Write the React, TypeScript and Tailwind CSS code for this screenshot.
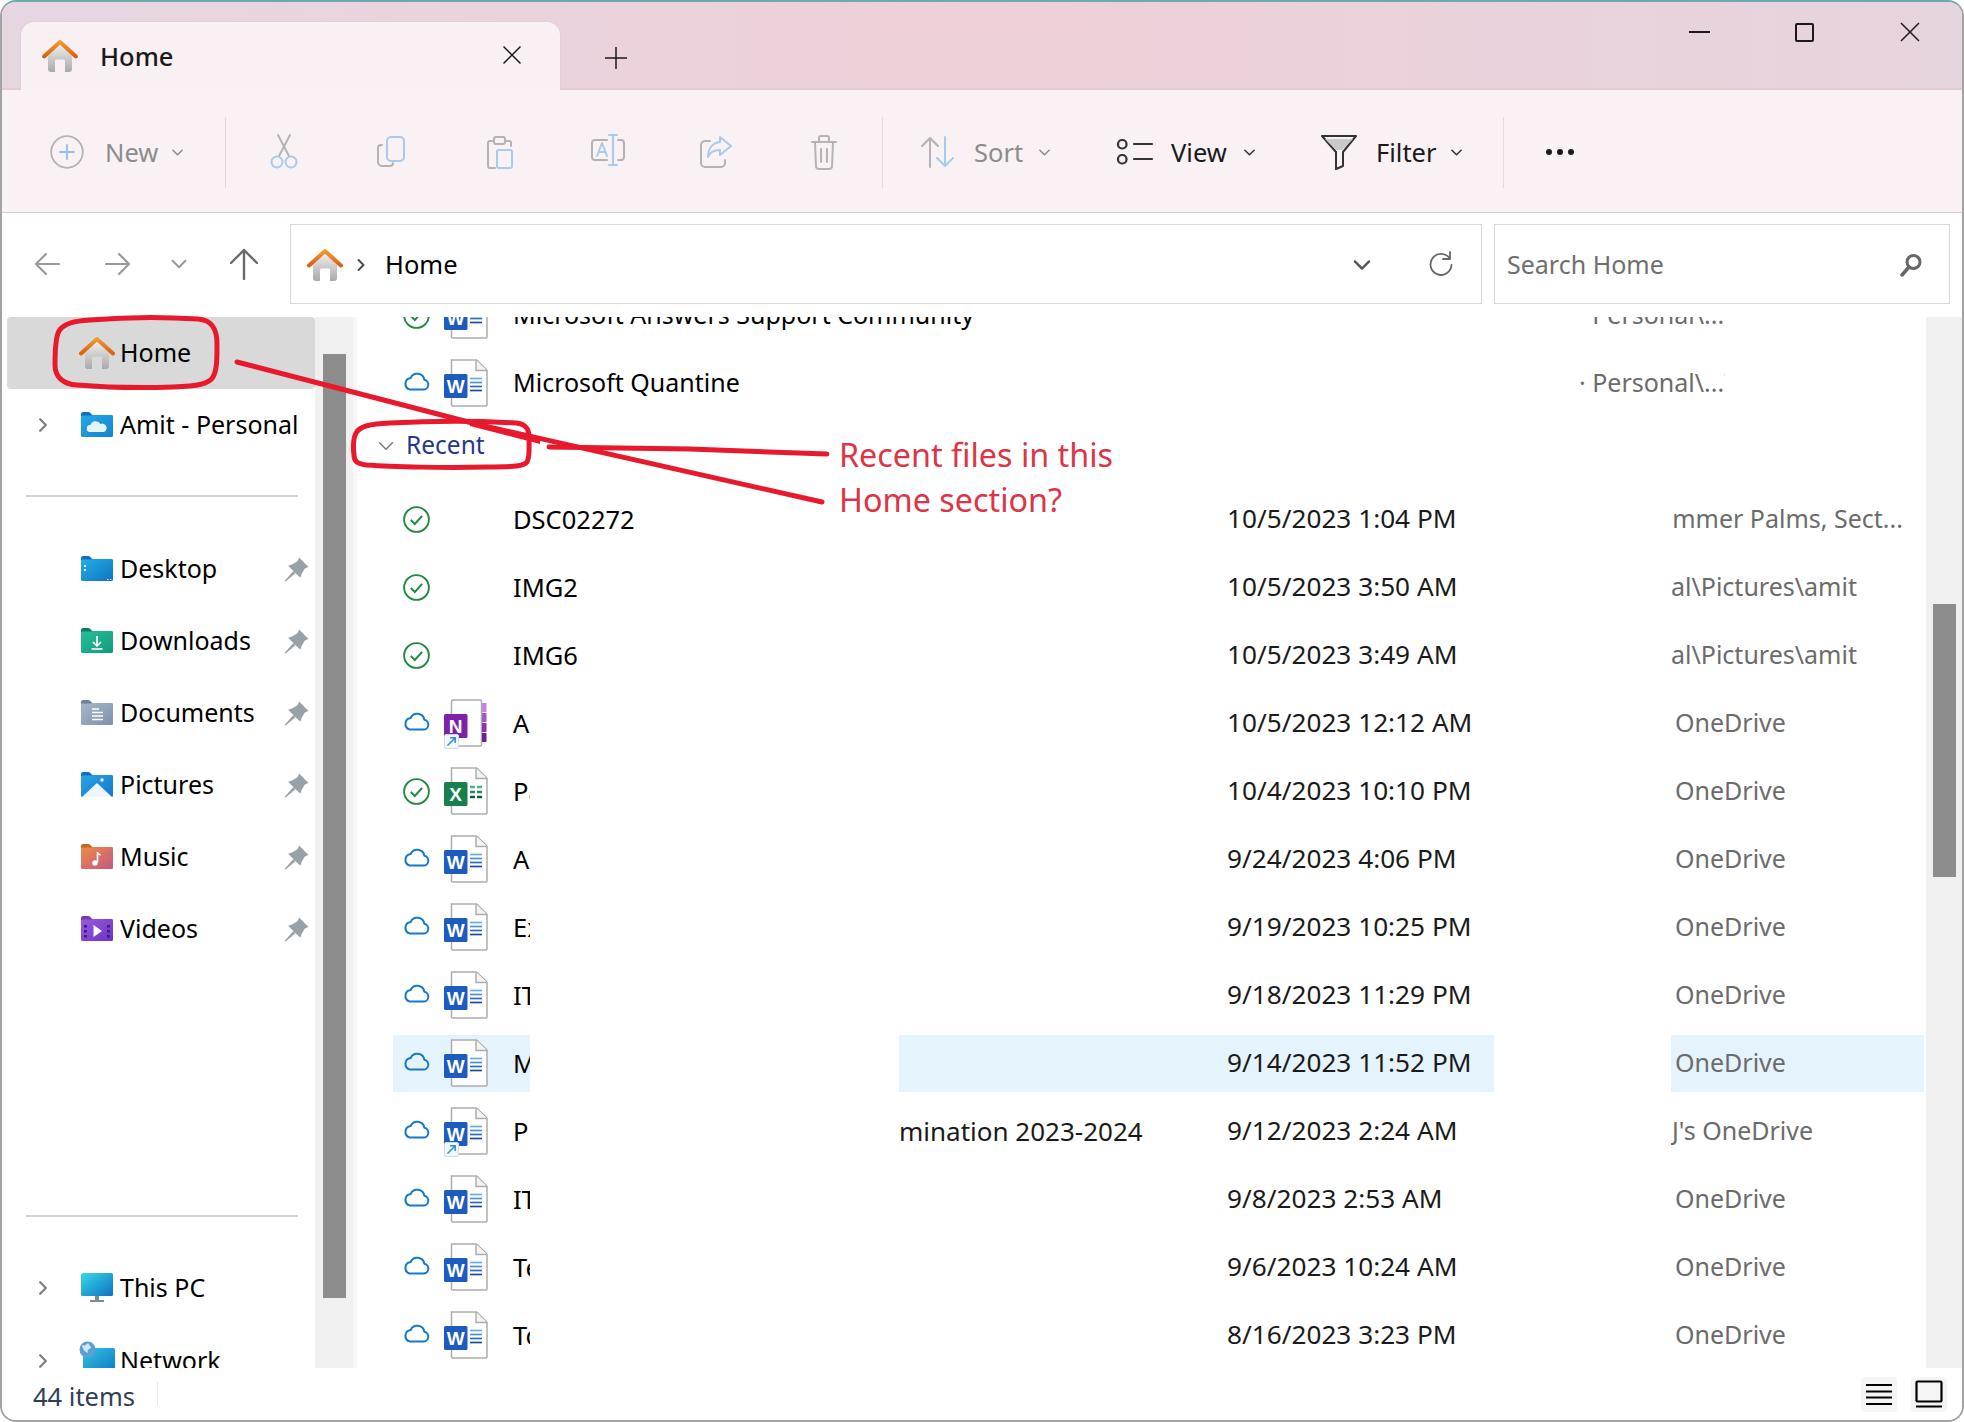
import React from "react";

const SANS = "font-['Noto_Sans',sans-serif]";

// ---- small shared drawings ----
function HomeIcon({ id }: { id: string }) {
  return (
    <svg width="36" height="34" viewBox="0 0 36 34" className="shrink-0">
      <defs>
        <linearGradient id={`body-${id}`} x1="0" y1="0" x2="0" y2="1">
          <stop offset="0" stopColor="#efefef" />
          <stop offset="1" stopColor="#a9a9a9" />
        </linearGradient>
        <linearGradient id={`roof-${id}`} x1="0" y1="0" x2="0" y2="1">
          <stop offset="0" stopColor="#f29a2e" />
          <stop offset="1" stopColor="#d9600f" />
        </linearGradient>
      </defs>
      <path d="M6 15 18 5l12 10v15a3 3 0 0 1-3 3h-4V22a1.500 1.500 0 0 0-1.500-1.500h-7A1.500 1.500 0 0 0 13 22v11H9a3 3 0 0 1-3-3z" fill={`url(#body-${id})`} />
      <path d="M2 17.500 18 3l16 14.500" fill="none" stroke={`url(#roof-${id})`} strokeWidth="4" strokeLinejoin="round" strokeLinecap="round" />
    </svg>
  );
}

function Chevron({ size = 14, color = "#8a8a8a", width = 1.6, dir = "down" }: { size?: number; color?: string; width?: number; dir?: "down" | "right" }) {
  return (
    <svg width={size} height={size} viewBox="0 0 14 14" fill="none" className="shrink-0">
      <path d={dir === "down" ? "M2 4.500 7 9.500 12 4.500" : "M4.500 2 9.500 7 4.500 12"} stroke={color} strokeWidth={width} strokeLinecap="round" strokeLinejoin="round" />
    </svg>
  );
}

function Folder({ id, tab, from, to, children }: { id: string; tab: string; from: string; to: string; children?: React.ReactNode }) {
  return (
    <svg width="32" height="26" viewBox="0 0 32 26" className="shrink-0">
      <defs>
        <linearGradient id={id} x1="0" y1="0" x2="1" y2="1">
          <stop offset="0" stopColor={from} />
          <stop offset="1" stopColor={to} />
        </linearGradient>
      </defs>
      <path d="M0 2a2 2 0 0 1 2-2h6l3.500 3H30a2 2 0 0 1 2 2v3H0z" fill={tab} />
      <path d="M0 3.500h9.500L12 3h18a2 2 0 0 1 2 2v18.500a1.500 1.500 0 0 1-1.500 1.500h-29A1.500 1.500 0 0 1 0 23.500z" fill={`url(#${id})`} />
      {children}
    </svg>
  );
}

const PIN = (
  <svg width="25" height="25" viewBox="0 0 24 24" className="shrink-0">
    <path d="M14.500 0.500 23.500 9.500 20 11 17 16 15.600 20 4 8.400 8 7 13 4z" fill="#98a1a8" />
    <path d="M9 13.500 0.500 23 1.500 23.500 11 15.500z" fill="#98a1a8" />
  </svg>
);

// ---- file type icons ----
function FileSheet({ children }: { children?: React.ReactNode }) {
  return (
    <svg width="44" height="48" viewBox="0 0 44 48" className="shrink-0">
      <path d="M7.500 1h25L43 11v35a1 1 0 0 1-1 1H8.500a1 1 0 0 1-1-1z" fill="#fff" stroke="#adadad" strokeWidth="1.500" />
      <path d="M32 1v10.500h11" fill="#f4f4f4" stroke="#adadad" strokeWidth="1.500" />
      {children}
    </svg>
  );
}

function WordIcon({ shortcut }: { shortcut?: boolean }) {
  return (
    <div className="relative shrink-0">
      <FileSheet>
        <rect x="0" y="15" width="23.500" height="24" rx="1.500" fill="#1d5bbf" />
        <text x="11.700" y="33.500" textAnchor="middle" fontSize="19" fontWeight="700" fill="#fff" fontFamily="Liberation Sans, sans-serif">W</text>
        <path d="M26 19.500h12" stroke="#66aee6" strokeWidth="1.700" />
        <path d="M26 23.500h12" stroke="#4d8fd6" strokeWidth="1.700" />
        <path d="M26 27.500h12" stroke="#2b6cc0" strokeWidth="1.700" />
        <path d="M26 31.500h12" stroke="#1a4c9c" strokeWidth="1.700" />
      </FileSheet>
      {shortcut && <ShortcutBadge />}
    </div>
  );
}

function ExcelIcon() {
  return (
    <FileSheet>
      <rect x="0" y="15" width="23.500" height="24" rx="1.500" fill="#1a7f4f" />
      <text x="11.700" y="33.500" textAnchor="middle" fontSize="19" fontWeight="700" fill="#fff" fontFamily="Liberation Sans, sans-serif">X</text>
      <path d="M26 20h5m2 0h5" stroke="#4fb384" strokeWidth="2.500" />
      <path d="M26 25h5m2 0h5" stroke="#1f8a58" strokeWidth="2.500" />
      <path d="M26 30h5m2 0h5" stroke="#125a3a" strokeWidth="2.500" />
    </FileSheet>
  );
}

function ShortcutBadge() {
  return (
    <svg width="15" height="15" viewBox="0 0 15 15" className="absolute left-0 top-[35px]">
      <rect x="0.500" y="0.500" width="14" height="14" rx="1.500" fill="#f3f8fc" stroke="#cfdbe6" />
      <path d="M3.500 11.500 11 4M6 3.800h5.200V9" fill="none" stroke="#2b8ed6" strokeWidth="1.500" />
    </svg>
  );
}

function OneNoteIcon() {
  return (
    <div className="relative shrink-0">
      <svg width="44" height="48" viewBox="0 0 44 48">
        <path d="M9 1h27a1.500 1.500 0 0 1 1.500 1.500v43a1.500 1.500 0 0 1-1.500 1.500H9a1.500 1.500 0 0 1-1.500-1.500v-43A1.500 1.500 0 0 1 9 1z" fill="#fff" stroke="#adadad" strokeWidth="1.500" />
        <rect x="38" y="4" width="4.500" height="9" fill="#c77fe0" />
        <rect x="38" y="14" width="4.500" height="9" fill="#a855c8" />
        <rect x="38" y="24" width="4.500" height="9" fill="#8a35ad" />
        <rect x="38" y="34" width="4.500" height="9" fill="#6f2391" />
        <rect x="0" y="15" width="23.500" height="24" rx="1.500" fill="#7b22a8" />
        <text x="11.700" y="33.500" textAnchor="middle" fontSize="19" fontWeight="700" fill="#fff" fontFamily="Liberation Sans, sans-serif">N</text>
      </svg>
      <ShortcutBadge />
    </div>
  );
}

const CLOUD = (
  <svg width="27" height="20" viewBox="0 0 27 20" fill="none" className="shrink-0 -translate-y-[2px]">
    <path d="M7 18.600h13.500a5 5 0 0 0 .8-9.900 7.200 7.200 0 0 0-13.700-1.700A5.900 5.900 0 0 0 7 18.600z" stroke="#1478cc" strokeWidth="2" strokeLinejoin="round" />
  </svg>
);

const CHECK = (
  <svg width="27" height="27" viewBox="0 0 27 27" fill="none" className="shrink-0">
    <circle cx="13.500" cy="13.500" r="12.400" stroke="#1f8a3d" strokeWidth="1.900" />
    <path d="M7.800 14 11.800 18 19.200 9.800" stroke="#1f8a3d" strokeWidth="1.900" />
  </svg>
);

// ---- data ----
type Row = { sync: "cloud" | "check"; icon?: "word" | "wordS" | "excel" | "note"; name: string; clip?: boolean; subject?: string; date: string; loc: string; locOffset?: number; selected?: boolean };

const ROWS: Row[] = [
  { sync: "check", name: "DSC02272", date: "10/5/2023 1:04 PM", loc: "Summer Palms, Sect...", locOffset: -28 },
  { sync: "check", name: "IMG2", date: "10/5/2023 3:50 AM", loc: "al\\Pictures\\amit" },
  { sync: "check", name: "IMG6", date: "10/5/2023 3:49 AM", loc: "al\\Pictures\\amit" },
  { sync: "cloud", icon: "note", name: "A", clip: true, date: "10/5/2023 12:12 AM", loc: "OneDrive", locOffset: 4 },
  { sync: "check", icon: "excel", name: "Pa", clip: true, date: "10/4/2023 10:10 PM", loc: "OneDrive", locOffset: 4 },
  { sync: "cloud", icon: "word", name: "A", clip: true, date: "9/24/2023 4:06 PM", loc: "OneDrive", locOffset: 4 },
  { sync: "cloud", icon: "word", name: "Ex", clip: true, date: "9/19/2023 10:25 PM", loc: "OneDrive", locOffset: 4 },
  { sync: "cloud", icon: "word", name: "IT", clip: true, date: "9/18/2023 11:29 PM", loc: "OneDrive", locOffset: 4 },
  { sync: "cloud", icon: "word", name: "M", clip: true, date: "9/14/2023 11:52 PM", loc: "OneDrive", locOffset: 4, selected: true },
  { sync: "cloud", icon: "wordS", name: "P", clip: true, subject: "mination 2023-2024", date: "9/12/2023 2:24 AM", loc: "J's OneDrive", locOffset: 1 },
  { sync: "cloud", icon: "word", name: "IT", clip: true, date: "9/8/2023 2:53 AM", loc: "OneDrive", locOffset: 4 },
  { sync: "cloud", icon: "word", name: "Te", clip: true, date: "9/6/2023 10:24 AM", loc: "OneDrive", locOffset: 4 },
  { sync: "cloud", icon: "word", name: "To", clip: true, date: "8/16/2023 3:23 PM", loc: "OneDrive", locOffset: 4 },
];

function FileIcon({ icon }: { icon?: Row["icon"] }) {
  if (icon === "word") return <WordIcon />;
  if (icon === "wordS") return <WordIcon shortcut />;
  if (icon === "excel") return <ExcelIcon />;
  if (icon === "note") return <OneNoteIcon />;
  return <div className="w-[44px] shrink-0" />;
}

function FileRow({ row }: { row: Row }) {
  const sel = row.selected ? "bg-[#e5f3fd]" : "";
  return (
    <div className="flex h-[68px] items-center pl-[36px]">
      <div className={`flex h-[57px] w-[137px] items-center pl-[10px] ${sel} ${row.clip ? "overflow-hidden" : ""}`}>
        {row.sync === "cloud" ? CLOUD : CHECK}
        <div className="ml-[14px]"><FileIcon icon={row.icon} /></div>
        <span className="ml-[25px] whitespace-nowrap text-[25.500px] text-black">{row.name}</span>
      </div>
      <div className="w-[369px]" />
      <div className={`flex h-[57px] w-[595px] items-center ${sel}`}>
        <span className="w-[328px] whitespace-nowrap text-[26px] text-[#1a1a1a]">{row.subject}</span>
        <span className="whitespace-nowrap text-[26.200px] text-[#1a1a1a]">{row.date}</span>
      </div>
      <div className="w-[177px]" />
      <div className={`flex h-[57px] w-[253px] items-center overflow-hidden ${sel}`}>
        <span style={{ marginLeft: row.locOffset ?? 0 }} className="whitespace-nowrap text-[25px] text-[#6b6b6b]">{row.loc}</span>
      </div>
    </div>
  );
}

function PinnedRow({ label, icon }: { label: string; icon: React.ReactNode }) {
  return (
    <div className="flex h-[72px] w-[313px] items-center pl-[79px]">
      {icon}
      <span className="ml-[7px] text-[25px] text-black">{label}</span>
      <div className="ml-auto mr-[6px]">{PIN}</div>
    </div>
  );
}

function TopFileRow({ name, loc }: { name: string; loc: string }) {
  return (
    <div className="flex h-[68px] items-center pl-[46px]">
      {name.includes("Answers") ? CHECK : CLOUD}
      <div className="ml-[14px]"><WordIcon /></div>
      <span className="ml-[25px] w-[1066px] whitespace-nowrap text-[25px] text-black">{name}</span>
      <span className="w-[146px] overflow-hidden whitespace-nowrap text-[25px] text-[#6b6b6b]">{loc}</span>
    </div>
  );
}

function ToolIcon({ children }: { children: React.ReactNode }) {
  return (
    <div className="flex w-[108px] items-center justify-center">
      <svg width="40" height="40" viewBox="0 0 40 40" fill="none" strokeLinecap="round" strokeLinejoin="round" strokeWidth="2">
        {children}
      </svg>
    </div>
  );
}

const GRAY = "#b3b3b3";
const BLUE = "#a8cbea";

export default function App() {
  return (
    <div className={`relative flex h-[1422px] w-[1964px] flex-col overflow-hidden rounded-[16px] border-2 border-[#a3a3a3] border-t-[#6fa9ad] bg-white ${SANS}`}>
      {/* title bar + tab */}
      <div className="flex h-[88px] shrink-0 items-start bg-gradient-to-r from-[#e6d6e2] via-[#eed0d8] to-[#e6d4df] shadow-[inset_0_-2px_0_#e2cbd3]">
        <div className="ml-[18px] mt-[19px] flex h-[69px] w-[541px] items-center rounded-t-[14px] border-x border-t border-[#e2d0d8] bg-[#f9f0f4] pl-[21px]">
          <HomeIcon id="tab" />
          <span className="ml-[22px] text-[25.500px] font-medium text-[#1a1a1a]">Home</span>
          <svg width="20" height="20" viewBox="0 0 20 20" className="ml-[329px] -translate-y-[1px]"><path d="M1.500 1.500 18.500 18.500M18.500 1.500 1.500 18.500" stroke="#1a1a1a" strokeWidth="1.500" /></svg>
        </div>
        <div className="mt-[19px] flex h-[74px] w-[110px] items-center justify-center">
          <svg width="22" height="22" viewBox="0 0 22 22"><path d="M11 0v22M0 11h22" stroke="#1a1a1a" strokeWidth="1.500" /></svg>
        </div>
        <div className="ml-auto flex">
          <div className="flex h-[60px] w-[105px] items-center justify-center">
            <div className="h-[2px] w-[21px] bg-[#1a1a1a]" />
          </div>
          <div className="flex h-[60px] w-[105px] items-center justify-center">
            <div className="h-[19px] w-[19px] rounded-[2px] border-2 border-[#1a1a1a]" />
          </div>
          <div className="flex h-[60px] w-[105px] items-center justify-center">
            <svg width="20" height="20" viewBox="0 0 20 20"><path d="M1 1 19 19M19 1 1 19" stroke="#1a1a1a" strokeWidth="1.500" /></svg>
          </div>
        </div>
      </div>

      {/* toolbar */}
      <div className="flex h-[123px] shrink-0 items-center border-b border-[#dccbd0] bg-[#f9f1f4] pt-[2px]">
        <div className="flex w-[223px] items-center pl-[48px] text-[25.500px] text-[#8c8c8c]">
          <svg width="34" height="34" viewBox="0 0 34 34" fill="none">
            <circle cx="17" cy="17" r="15.800" stroke={GRAY} strokeWidth="1.800" />
            <path d="M17 10v14M10 17h14" stroke="#8fbfe6" strokeWidth="1.800" strokeLinecap="round" />
          </svg>
          <span className="ml-[21px]">New</span>
          <div className="ml-[13px]"><Chevron size={13} color="#8c8c8c" /></div>
        </div>
        <div className="h-[71px] w-px bg-[#e4dade]" />
        <div className="w-[4px]" />
        <ToolIcon>
          <path d="M14 3 25 24M26 3 15 24" stroke={GRAY} />
          <circle cx="13" cy="30" r="5.500" stroke={BLUE} />
          <circle cx="27" cy="30" r="5.500" stroke={BLUE} />
        </ToolIcon>
        <ToolIcon>
          <path d="M10 13h-1a3 3 0 0 0-3 3v14a4 4 0 0 0 4 4h8a3 3 0 0 0 3-3" stroke={GRAY} />
          <rect x="15" y="5" width="17" height="24" rx="4" stroke={BLUE} />
        </ToolIcon>
        <ToolIcon>
          <path d="M13 9h-3a2 2 0 0 0-2 2v23a2 2 0 0 0 2 2h5M26 9h3a2 2 0 0 1 2 2v3" stroke={GRAY} />
          <rect x="14" y="5" width="11" height="7" rx="2" stroke={GRAY} />
          <rect x="17" y="18" width="15" height="18" rx="2" stroke={BLUE} />
        </ToolIcon>
        <ToolIcon>
          <path d="M19 8H7a3 3 0 0 0-3 3v14a3 3 0 0 0 3 3h12M30 8h3a3 3 0 0 1 3 3v14a3 3 0 0 1-3 3h-3" stroke={GRAY} />
          <path d="M21 3h8M25 3v30M21 33h8M9 24l5-13 5 13M11 20h6" stroke={BLUE} />
        </ToolIcon>
        <ToolIcon>
          <path d="M14 9H9a4 4 0 0 0-4 4v18a4 4 0 0 0 4 4h16a4 4 0 0 0 4-4v-3" stroke={GRAY} />
          <path d="M24 5l11 9-11 9v-5c-6 0-10 2-12 7 0-8 4-14 12-15z" stroke={BLUE} />
        </ToolIcon>
        <ToolIcon>
          <path d="M8 10h24M15 10V6a2 2 0 0 1 2-2h6a2 2 0 0 1 2 2v4M11 10l1 24a3 3 0 0 0 3 3h10a3 3 0 0 0 3-3l1-24M17 17v13M23 17v13" stroke={GRAY} />
        </ToolIcon>
        <div className="w-[4px]" />
        <div className="h-[71px] w-px bg-[#e4dade]" />
        <div className="flex w-[213px] items-center pl-[37px] text-[25.500px] text-[#8c8c8c]">
          <svg width="36" height="34" viewBox="0 0 36 34" fill="none" strokeWidth="2" strokeLinecap="round" strokeLinejoin="round">
            <path d="M10 32V3M2 11l8-8 8 8" stroke={GRAY} />
            <path d="M25 2v29M17 23l8 8 8-8" stroke={BLUE} />
          </svg>
          <span className="ml-[18px]">Sort</span>
          <div className="ml-[15px]"><Chevron size={13} color="#8c8c8c" /></div>
        </div>
        <div className="flex w-[204px] items-center pl-[20px] text-[25.500px] text-[#1a1a1a]">
          <svg width="38" height="30" viewBox="0 0 38 30" fill="none" stroke="#333" strokeWidth="2.200" strokeLinecap="round">
            <rect x="2" y="3" width="8.500" height="8.500" rx="4" />
            <rect x="2" y="18" width="8.500" height="8.500" rx="4" />
            <path d="M18 7h18M18 22h18" />
          </svg>
          <span className="ml-[17px]">View</span>
          <div className="ml-[16px]"><Chevron size={13} color="#333" /></div>
        </div>
        <div className="flex w-[203px] items-center pl-[20px] text-[25.500px] text-[#1a1a1a]">
          <svg width="38" height="36" viewBox="0 0 38 36" fill="none" stroke="#333" strokeWidth="2" strokeLinejoin="round">
            <path d="M2 2h34L23 18v14l-7 3V18z" />
            <path d="M5 5h28L22 16H16z" fill="#c9c9c9" stroke="none" />
          </svg>
          <span className="ml-[18px]">Filter</span>
          <div className="ml-[13px]"><Chevron size={13} color="#333" /></div>
        </div>
        <div className="h-[71px] w-px bg-[#e4dade]" />
        <div className="ml-[42px] flex gap-[5px]">
          <div className="h-[6px] w-[6px] rounded-full bg-[#1a1a1a]" />
          <div className="h-[6px] w-[6px] rounded-full bg-[#1a1a1a]" />
          <div className="h-[6px] w-[6px] rounded-full bg-[#1a1a1a]" />
        </div>
      </div>

      {/* nav + address */}
      <div className="flex h-[104px] shrink-0 items-start bg-white pl-[9px] pt-[11px]">
        <div className="flex h-[80px] w-[71px] items-center justify-center">
          <svg width="26" height="24" viewBox="0 0 26 24" fill="none" stroke="#9a9a9a" strokeWidth="2.200" strokeLinecap="round" strokeLinejoin="round"><path d="M25 12H2M12 2 2 12l10 10" /></svg>
        </div>
        <div className="flex h-[80px] w-[71px] items-center justify-center">
          <svg width="26" height="24" viewBox="0 0 26 24" fill="none" stroke="#9a9a9a" strokeWidth="2.200" strokeLinecap="round" strokeLinejoin="round"><path d="M1 12h23M14 2l10 10-10 10" /></svg>
        </div>
        <div className="flex h-[80px] w-[52px] items-center justify-center"><Chevron size={18} color="#9a9a9a" /></div>
        <div className="flex h-[80px] w-[78px] items-center justify-center">
          <svg width="30" height="32" viewBox="0 0 30 32" fill="none" stroke="#6b6b6b" strokeWidth="2.400" strokeLinecap="round" strokeLinejoin="round"><path d="M15 31V2M2 15 15 2l13 13" /></svg>
        </div>
        <div className="ml-[7px] flex h-[80px] w-[1192px] items-center border border-[#d8d8d8] pl-[16px] pr-[12px] pt-[1px]">
          <HomeIcon id="addr" />
          <div className="flex w-[36px] justify-center"><Chevron size={14} color="#4d4d4d" width={2} dir="right" /></div>
          <span className="ml-[6px] text-[25.500px] text-black">Home</span>
          <div className="ml-auto"><Chevron size={20} color="#555" /></div>
          <svg width="26" height="28" viewBox="0 0 26 28" fill="none" stroke="#666" strokeWidth="1.800" className="ml-[56px] mr-[15px] -translate-y-[1px]"><path d="M22 9a10.500 10.500 0 1 0 1.500 6M22 2v7h-7" strokeLinejoin="round" strokeLinecap="round" /></svg>
        </div>
        <div className="ml-[12px] flex h-[80px] w-[456px] items-center border border-[#d8d8d8] pl-[12px] pr-[26px] pt-[2px]">
          <span className="text-[25px] text-[#6f6f6f]">Search Home</span>
          <svg width="24" height="24" viewBox="0 0 24 24" fill="none" className="ml-auto"><circle cx="14.500" cy="9" r="6.500" stroke="#666" strokeWidth="3" /><path d="M10 14 3 22" stroke="#666" strokeWidth="3.500" strokeLinecap="round" /></svg>
        </div>
      </div>

      {/* sidebar + file list */}
      <div className="flex h-[1051px] shrink-0">
        <div className="flex w-[351px] shrink-0 overflow-hidden">
          <div className="w-[313px] shrink-0">
            <div className="ml-[5px] flex h-[72px] w-[308px] items-center rounded-[4px] bg-[#d9d9d9] pl-[72px]">
              <HomeIcon id="side" />
              <span className="ml-[5px] text-[25px] text-black">Home</span>
            </div>
            <div className="flex h-[72px] items-center pl-[33px]">
              <Chevron size={16} color="#808080" width={2} dir="right" />
              <div className="ml-[30px]">
                <Folder id="amit" tab="#0f6fc4" from="#23a9e8" to="#1583cf">
                  <path d="M9 20a3.500 3.500 0 0 1 .5-7 5.500 5.500 0 0 1 10-1 4 4 0 0 1 3.500 8z" fill="#e8f4fb" />
                </Folder>
              </div>
              <span className="ml-[7px] whitespace-nowrap text-[25px] text-black">Amit - Personal</span>
            </div>
            <div className="ml-[24px] mt-[34px] h-[2px] w-[272px] bg-[#d4d4d4]" />
            <div className="h-[36px]" />
            <PinnedRow label="Desktop" icon={
              <Folder id="desk" tab="#0f6fc4" from="#23b0e6" to="#0f74c2">
                <path d="M3 9h2v2H3zM3 13h2v2H3zM26 23h1.500v1H26zM29 23h1.500v1H29z" fill="#d8f1fb" />
              </Folder>
            } />
            <PinnedRow label="Downloads" icon={
              <Folder id="down" tab="#0d7d62" from="#28bf9a" to="#129a7c">
                <path d="M16 8v10M12 14l4 4 4-4M10.500 21h11" stroke="#fff" strokeWidth="1.600" fill="none" />
              </Folder>
            } />
            <PinnedRow label="Documents" icon={
              <Folder id="docs" tab="#6f8296" from="#a5b7cc" to="#7d91a9">
                <path d="M11 9h7M11 12.500h11M11 16h11M11 19.500h11" stroke="#fff" strokeWidth="1.500" />
              </Folder>
            } />
            <PinnedRow label="Pictures" icon={
              <Folder id="pics" tab="#0f6fc4" from="#29a6e8" to="#1476cc">
                <path d="M1 25 16 11l15 14z" fill="#eef5fb" />
                <circle cx="21" cy="8" r="1.700" fill="#fff" />
              </Folder>
            } />
            <PinnedRow label="Music" icon={
              <Folder id="music" tab="#c4671f" from="#f08a4a" to="#c0597e">
                <path d="M16.500 8v10.500" stroke="#fff" strokeWidth="1.600" />
                <circle cx="14" cy="19" r="2.700" fill="#fff" />
                <path d="M16.500 8c1 1.500 3 1.500 3.500 3.500l-3.500-.5z" fill="#fff" />
              </Folder>
            } />
            <PinnedRow label="Videos" icon={
              <Folder id="vid" tab="#6f3fb0" from="#9a5ae0" to="#6b33c4">
                <path d="M12.500 9 21 15l-8.500 6z" fill="#fff" />
                <path d="M3 9h3v2.500H3zM3 14h3v2.500H3zM3 19h3v2.500H3zM26 9h3v2.500h-3zM26 14h3v2.500h-3zM26 19h3v2.500h-3z" fill="#3c1f7a" />
              </Folder>
            } />
            <div className="ml-[24px] mt-[250px] h-[2px] w-[272px] bg-[#d4d4d4]" />
            <div className="h-[35px]" />
            <div className="flex h-[72px] items-center pl-[33px]">
              <Chevron size={16} color="#808080" width={2} dir="right" />
              <svg width="32" height="30" viewBox="0 0 32 30" className="ml-[30px] shrink-0">
                <defs>
                  <linearGradient id="pc" x1="0" y1="0" x2="1" y2="1">
                    <stop offset="0" stopColor="#35dbe6" />
                    <stop offset="1" stopColor="#0f6fc4" />
                  </linearGradient>
                </defs>
                <rect x="0" y="0" width="32" height="23" rx="1.500" fill="url(#pc)" />
                <path d="M14 23h4v4h-4zM9 27h14v2H9z" fill="#808b94" />
              </svg>
              <span className="ml-[7px] text-[25px] text-black">This PC</span>
            </div>
            <div className="flex h-[72px] items-start pl-[33px] pt-[18px]">
              <div className="mt-[11px]"><Chevron size={16} color="#808080" width={2} dir="right" /></div>
              <svg width="36" height="30" viewBox="0 0 36 30" className="ml-[28px] -mt-[1px] shrink-0">
                <defs>
                  <linearGradient id="net" x1="0" y1="0" x2="1" y2="1">
                    <stop offset="0" stopColor="#35c3e0" />
                    <stop offset="1" stopColor="#0f7cc4" />
                  </linearGradient>
                </defs>
                <rect x="4" y="7" width="32" height="23" rx="1.500" fill="url(#net)" />
                <circle cx="8.500" cy="8.500" r="8" fill="#5a9fd6" />
                <path d="M3 4c3 1 4 0 6-2 1 2 3 3 3 5-2 1-4 2-3 5-3-1-5-3-6-8z" fill="#cfe6f5" />
              </svg>
              <span className="ml-[5px] text-[25px] text-black">Network</span>
            </div>
          </div>
          <div className="w-[38px] shrink-0 bg-[#f0f0f0] px-[8px] pt-[37px]">
            <div className="h-[944px] w-[23px] bg-[#8c8c8c]" />
          </div>
        </div>
        <div className="w-[4px] shrink-0 bg-[#f7f7f7]" />
        <div className="w-[1569px] shrink-0 overflow-hidden">
          <div className="-mt-[36px]">
            <TopFileRow name="Microsoft Answers Support Community" loc="· Personal\...\" />
            <TopFileRow name="Microsoft Quantine" loc="· Personal\...\" />
            <div className="flex h-[68px] items-start pl-[20px] pt-[11px]">
              <div className="mt-[9px]"><Chevron size={18} color="#7a7a7a" width={1.2} /></div>
              <span className="ml-[11px] text-[24.500px] leading-[34px] text-[#25388c]">Recent</span>
            </div>
            {ROWS.map((row, i) => <FileRow key={i} row={row} />)}
          </div>
        </div>
        <div className="w-[36px] shrink-0 bg-[#f0f0f0] px-[7px] pt-[287px]">
          <div className="h-[273px] w-[23px] bg-[#8c8c8c]" />
        </div>
      </div>

      {/* status bar */}
      <div className="flex h-[52px] shrink-0 items-center bg-white pl-[31px] pr-[15px]">
        <span className="w-[124px] pt-[4px] text-[25.500px] text-[#2f3f57]">44 items</span>
        <div className="h-[24px] w-px bg-[#e8e8e8]" />
        <div className="ml-auto flex h-[35px] w-[36px] items-center justify-center rounded-[4px] bg-[#f5f5f5]">
          <svg width="28" height="24" viewBox="0 0 28 24" stroke="#000" strokeWidth="2.200"><path d="M1 3h26M1 9.500h26M1 15.500h26M1 22h26" /></svg>
        </div>
        <div className="ml-[14px] flex h-[35px] w-[36px] items-center justify-center rounded-[4px] bg-[#f5f5f5]">
          <svg width="28" height="28" viewBox="0 0 28 28" fill="none" stroke="#000" strokeWidth="2.200"><rect x="1.500" y="1.500" width="25" height="20" rx="1" /><path d="M1 26.500h26" /></svg>
        </div>
      </div>

      {/* red annotations on top of the screenshot */}
      <svg width="1964" height="1422" viewBox="0 0 1964 1422" fill="none" className="pointer-events-none absolute -left-[2px] -top-[2px]">
        <path d="M90 320c35-3 78-3 108-1 14 1 19 10 19 25 0 15 0 26-4 33-4 7-15 9-40 10-30 1-72 0-96-2-13-1-22-7-22-20 0-12 0-27 4-34 5-8 16-10 31-11z" stroke="#e8192c" strokeWidth="5" />
        <path d="M390 423c40-2 90-2 126 0 10 1 13 6 13 14 0 10 1 20-2 25-3 4-12 5-40 5-40 1-95 0-120-2-9-1-13-3-13-10-1-8-1-16 2-22 4-7 14-9 34-10z" stroke="#e8192c" strokeWidth="5" />
        <path d="M237 362 480 425 822 502" stroke="#e8192c" strokeWidth="5" strokeLinecap="round" />
        <path d="M470 420 540 440 540 444 470 426z" fill="#e8192c" />
        <path d="M549 447 690 449 827 454" stroke="#e8192c" strokeWidth="5" strokeLinecap="round" />
      </svg>
      <div className="pointer-events-none absolute left-[837px] top-[430px] whitespace-nowrap text-[32.300px] leading-[45px] text-[#dc3545]">
        <div>Recent files in this</div>
        <div>Home section?</div>
      </div>
    </div>
  );
}
